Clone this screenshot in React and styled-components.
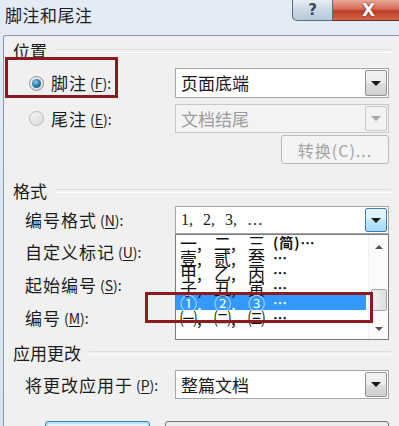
import React from "react";
import styled, { createGlobalStyle, css } from "styled-components";

const FONT = `"Noto Sans CJK SC", "Microsoft YaHei", "Noto Sans", sans-serif`;

const Global = createGlobalStyle`
  html, body { margin: 0; padding: 0; background: #dce6f1; overflow: hidden; }
  * { box-sizing: border-box; }
`;

const Window = styled.div`
  position: relative;
  width: 399px;
  height: 426px;
  overflow: hidden;
  background: linear-gradient(180deg, #e3ebf4 0%, #d6e2ef 100%);
  font-family: ${FONT};
  color: #1b1b1b;
`;

const TitleBar = styled.div`
  height: 35px;
  display: flex;
  align-items: flex-start;
  justify-content: space-between;
`;

const Title = styled.div`
  padding: 3px 0 0 5px;
  font-size: 17px;
  line-height: 24px;
  letter-spacing: 0.5px;
  color: #1e1e1e;
`;

const Controls = styled.div`
  display: flex;
  margin-right: -6px;
`;

const CtlButton = styled.div`
  height: 21px;
  display: flex;
  align-items: center;
  justify-content: center;
  font-family: "DejaVu Sans", sans-serif;
  font-weight: bold;
  ${(p) =>
    p.$close
      ? css`
          width: 72px;
          border: 1px solid #6e2a22;
          border-top: none;
          border-left: none;
          background: linear-gradient(180deg, #e9a99b 0%, #d66b55 45%, #c03d24 55%, #d2664a 100%);
          color: #fff;
          font-size: 17px;
          text-shadow: 0 0 2px #4a1410;
        `
      : css`
          width: 41px;
          border: 1px solid #5b6b80;
          border-top: none;
          border-bottom-left-radius: 5px;
          background: linear-gradient(180deg, #e8eef5 0%, #cbd7e4 50%, #b9c8d9 100%);
          color: #3a4a5e;
          font-size: 15px;
        `}
`;

const Body = styled.div`
  height: 391px;
  margin-left: 3px;
  border-top: 1px solid #8899ad;
  border-left: 1px solid #8899ad;
  border-top-left-radius: 3px;
  background: #f0f0f0;
  padding: 5px 0 0 9px;
  display: flex;
  flex-direction: column;
  & > * { flex-shrink: 0; }
`;

const GroupHeader = styled.div`
  display: flex;
  align-items: center;
  gap: 8px;
  height: 20px;
  margin-top: ${(p) => p.$mt || 0}px;
  font-size: 17px;
  line-height: 20px;
  &::after {
    content: "";
    flex: 1;
    height: 2px;
    margin-right: 8px;
    border-top: 1px solid #d5dfe5;
    border-bottom: 1px solid #ffffff;
  }
`;

const Row = styled.div`
  display: grid;
  grid-template-columns: 162px 214px;
  align-items: center;
  height: ${(p) => p.$h || 30}px;
  margin-top: ${(p) => p.$mt || 0}px;
`;

const Label = styled.div`
  display: flex;
  align-items: center;
  padding-left: ${(p) => p.$indent ?? 12}px;
  font-size: 17px;
  line-height: 20px;
  letter-spacing: 1px;
  color: #1b1b1b;
  white-space: nowrap;
`;

const Key = styled.span`
  font-size: 14px;
  letter-spacing: 0;
  margin-left: 3px;
  u { text-decoration-thickness: 1px; text-underline-offset: 2px; }
`;

const Radio = styled.span`
  width: 15px;
  height: 15px;
  border-radius: 50%;
  margin: 0 7px 0 2px;
  flex: none;
  display: inline-flex;
  align-items: center;
  justify-content: center;
  border: 1px solid ${(p) => (p.$disabled ? "#b8b8b8" : "#8a8f95")};
  background: ${(p) =>
    p.$disabled ? "linear-gradient(135deg,#f4f4f4,#dcdcdc)" : "linear-gradient(135deg,#f4f4f4,#d6d6d6)"};
  &::after {
    content: "";
    display: ${(p) => (p.$checked ? "block" : "none")};
    width: 9px;
    height: 9px;
    border-radius: 50%;
    background: radial-gradient(circle at 40% 35%, #8fd0f0 0%, #2a7fb4 45%, #0d4a78 100%);
  }
`;

const SelectWrap = styled.div`
  position: relative;
  height: 100%;
`;

const SelectBox = styled.div`
  height: 100%;
  display: flex;
  align-items: center;
  justify-content: space-between;
  padding: 1px 1px 1px 5px;
  border: 1px solid ${(p) => (p.$disabled ? "#c6c9cc" : "#a3a8ae")};
  background: ${(p) => (p.$disabled ? "#f3f3f3" : "#ffffff")};
  color: ${(p) => (p.$disabled ? "#9c9c9c" : "#1b1b1b")};
  font-size: 17px;
  line-height: 20px;
`;

const SelectText = styled.span`
  font-family: ${(p) => (p.$mono ? `"Liberation Serif", ${FONT}` : FONT)};
  font-size: ${(p) => (p.$mono ? 16 : 17)}px;
  word-spacing: ${(p) => (p.$mono ? 6 : 0)}px;
`;

const Arrow = styled.span`
  width: 22px;
  align-self: stretch;
  display: flex;
  align-items: center;
  justify-content: center;
  border-radius: 2px;
  ${(p) =>
    p.$focus
      ? css`
          border: 1px solid #3c7fb1;
          background: linear-gradient(180deg, #eaf6fd 0%, #d9f0fc 50%, #bee6fd 51%, #a7d9f5 100%);
        `
      : p.$disabled
      ? css`
          border: 1px solid #c6c9cc;
          background: #f3f3f3;
        `
      : css`
          border: 1px solid #8f9499;
          background: linear-gradient(180deg, #f2f2f2 0%, #ebebeb 50%, #dddddd 51%, #cfcfcf 100%);
        `}
  &::after {
    content: "";
    border-left: 5px solid transparent;
    border-right: 5px solid transparent;
    border-top: 5px solid ${(p) => (p.$disabled ? "#a8a8a8" : "#1a1a1a")};
  }
`;

const Select = ({ text, disabled, focus, mono, children }) => (
  <SelectWrap>
    <SelectBox $disabled={disabled}>
      <SelectText $mono={mono}>{text}</SelectText>
      <Arrow $disabled={disabled} $focus={focus} />
    </SelectBox>
    {children}
  </SelectWrap>
);

const PushButton = styled.div`
  grid-column: 2;
  justify-self: end;
  width: 108px;
  height: 29px;
  display: flex;
  align-items: center;
  justify-content: center;
  border: 1px solid #b5b9bd;
  border-radius: 3px;
  background: #f4f4f4;
  color: #a3a3a3;
  font-size: 16px;
  letter-spacing: 1px;
`;

const List = styled.div`
  position: absolute;
  top: 100%;
  left: 0;
  width: 214px;
  height: 106px;
  border: 1px solid #7a7a7a;
  background: #ffffff;
  overflow: hidden;
  display: flex;
  z-index: 2;
`;

const Items = styled.div`
  flex: 1;
`;

const Item = styled.div`
  height: 15px;
  display: flex;
  align-items: center;
  padding-left: 4px;
  margin-right: 2px;
  font-size: 17px;
  line-height: 15px;
  white-space: nowrap;
  color: ${(p) => (p.$selected ? "#e8fbff" : "#111")};
  background: ${(p) => (p.$selected ? "#3399ff" : "transparent")};
`;

const Cell = styled.span`
  display: inline-block;
  width: ${(p) => p.$w || 34}px;
`;

const Tail = styled.span`
  font-size: 14px;
  font-weight: bold;
  letter-spacing: 1px;
`;

const Scroll = styled.div`
  width: 20px;
  position: relative;
  background: #fbfbfb;
  border-left: 1px solid #f0f0f0;
`;

const ScrollArrow = styled.span`
  position: absolute;
  left: 6px;
  ${(p) => (p.$up ? "top: 10px;" : "bottom: 8px;")}
  border-left: 4px solid transparent;
  border-right: 4px solid transparent;
  ${(p) => (p.$up ? "border-bottom: 4px solid #555;" : "border-top: 4px solid #555;")}
`;

const Thumb = styled.span`
  position: absolute;
  left: 2px;
  top: 54px;
  width: 16px;
  height: 22px;
  border: 1px solid #a8a8a8;
  border-radius: 2px;
  background: linear-gradient(90deg, #f0f0f0, #dedede);
`;

const Highlight = styled.div`
  position: absolute;
  border: 3px solid #8c1b1f;
  pointer-events: none;
  z-index: 5;
  left: ${(p) => p.$x}px;
  top: ${(p) => p.$y}px;
  width: ${(p) => p.$w}px;
  height: ${(p) => p.$h}px;
`;

const ButtonBar = styled.div`
  display: flex;
  gap: 15px;
  margin-top: 22px;
  padding-left: 32px;
`;

const DialogButton = styled.div`
  height: 28px;
  width: ${(p) => p.$w}px;
  border-radius: 3px;
  border: 1px solid ${(p) => (p.$default ? "#3c7fb1" : "#707070")};
  background: ${(p) => (p.$default ? "#e3f4fc" : "#ececec")};
  box-shadow: ${(p) => (p.$default ? "inset 0 0 0 2px #b4e4f9" : "none")};
`;

const K = ({ k }) => (
  <Key>
    (<u>{k}</u>):
  </Key>
);

const rows = [
  ["一,", "二,", "三", "(简)…"],
  ["壹,", "贰,", "叁", "…"],
  ["甲,", "乙,", "丙", "…"],
  ["子,", "丑,", "寅", "…"],
  ["①,", "②,", "③", "…"],
  ["㈠,", "㈡,", "㈢", "…"],
];

export default function App() {
  return (
    <>
      <Global />
      <Window>
        <TitleBar>
          <Title>脚注和尾注</Title>
          <Controls>
            <CtlButton>?</CtlButton>
            <CtlButton $close>X</CtlButton>
          </Controls>
        </TitleBar>
        <Body>
          <GroupHeader>位置</GroupHeader>
          <Row $mt={7}>
            <Label $indent={14}>
              <Radio $checked />
              脚注
              <K k="F" />
            </Label>
            <Select text="页面底端" />
          </Row>
          <Row $mt={6} $h={29}>
            <Label $indent={14}>
              <Radio $disabled />
              尾注
              <K k="E" />
            </Label>
            <Select text="文档结尾" disabled />
          </Row>
          <Row $mt={2} $h={29}>
            <PushButton>转换(C)...</PushButton>
          </Row>

          <GroupHeader $mt={17}>格式</GroupHeader>
          <Row $mt={5} $h={28}>
            <Label>
              编号格式
              <K k="N" />
            </Label>
            <Select text="1, 2, 3, …" mono focus>
              <List>
                <Items>
                  {rows.map((r, i) => (
                    <Item key={i} $selected={i === 4}>
                      <Cell>{r[0]}</Cell>
                      <Cell>{r[1]}</Cell>
                      <Cell $w={25}>{r[2]}</Cell>
                      <Tail>{r[3]}</Tail>
                    </Item>
                  ))}
                </Items>
                <Scroll>
                  <ScrollArrow $up />
                  <Thumb />
                  <ScrollArrow />
                </Scroll>
              </List>
            </Select>
          </Row>
          <Row $mt={3}>
            <Label>
              自定义标记
              <K k="U" />
            </Label>
          </Row>
          <Row $mt={3}>
            <Label>
              起始编号
              <K k="S" />
            </Label>
          </Row>
          <Row $mt={3}>
            <Label>
              编号
              <K k="M" />
            </Label>
          </Row>

          <GroupHeader $mt={10}>应用更改</GroupHeader>
          <Row $mt={7} $h={29}>
            <Label>
              将更改应用于
              <K k="P" />
            </Label>
            <Select text="整篇文档" />
          </Row>
          <ButtonBar>
            <DialogButton $default $w={105} />
            <DialogButton $w={224} />
          </ButtonBar>
        </Body>
        <Highlight $x={5} $y={57} $w={113} $h={41} />
        <Highlight $x={145} $y={292} $w={228} $h={31} />
      </Window>
    </>
  );
}
